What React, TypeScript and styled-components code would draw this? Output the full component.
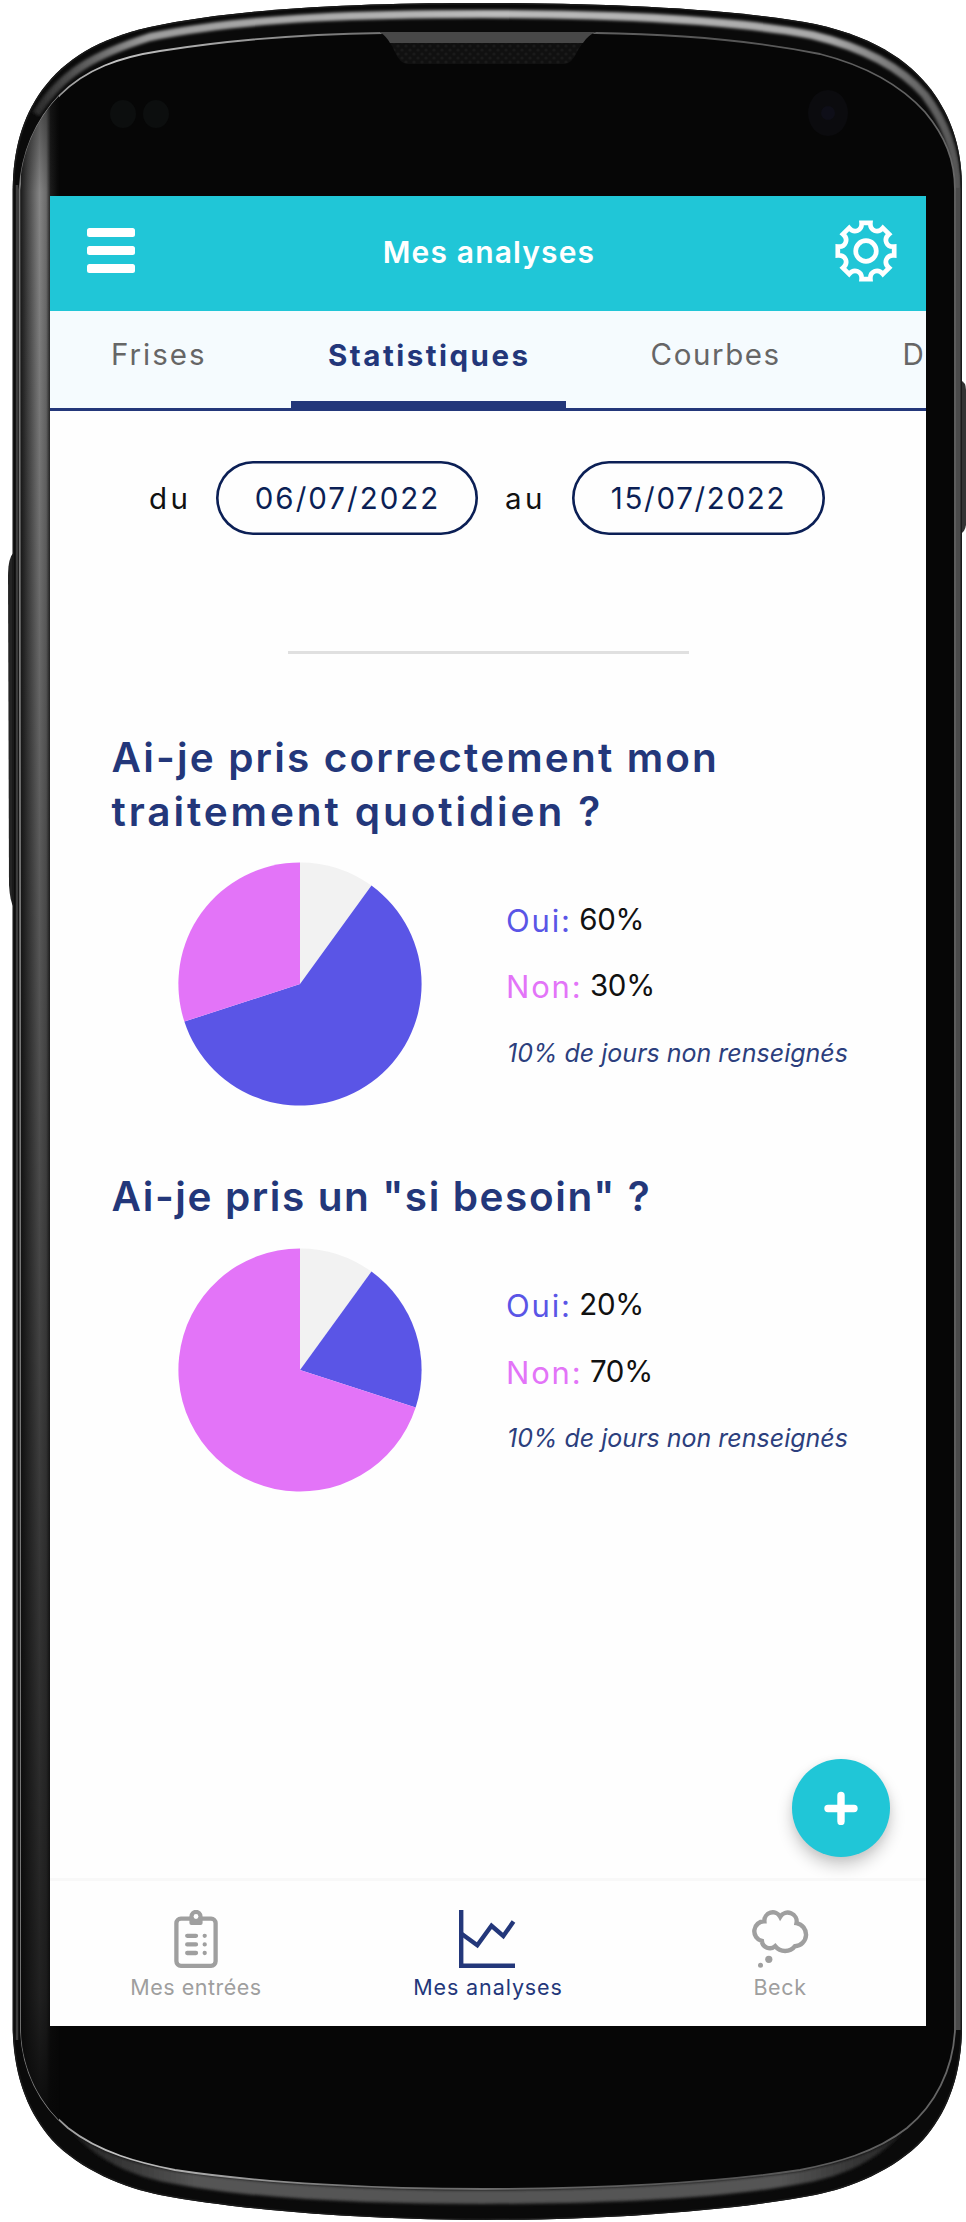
import React from "react";
import styled, { createGlobalStyle } from "styled-components";

const cyan = "#20c6d7";
const navy = "#23377a";
const ink = "#0b1f55";
const violet = "#5a55e6";
const pink = "#e374f8";
const grey = "#9f9f9f";

const GlobalStyle = createGlobalStyle`
  * { box-sizing: border-box; }
  body { margin: 0; background: #fff; font-family: Inter, Roboto, "Liberation Sans", sans-serif; }
`;

const Phone = styled.div`
  position: relative;
  width: 966px;
  height: 2222px;
  padding: 196px 40px 196px 50px;
  overflow: hidden;
`;

const Shell = styled.svg`
  position: absolute;
  inset: 0;
`;

const Screen = styled.main`
  position: relative;
  display: flex;
  flex-direction: column;
  width: 876px;
  height: 1830px;
  background: #fefefe;
  overflow: hidden;
`;

const Header = styled.header`
  display: grid;
  grid-template-columns: 1fr auto 1fr;
  align-items: center;
  flex: none;
  height: 114.5px;
  padding: 0 29.5px 5.5px 36.5px;
  background: ${cyan};
`;

const Title = styled.h1`
  margin: 0;
  padding: 2px 5px 0 0;
  color: #fff;
  font-size: 30px;
  font-weight: 600;
  line-height: 40px;
  letter-spacing: 1.15px;
`;

const MenuButton = styled.button`
  display: flex;
  flex-direction: column;
  gap: 9.8px;
  width: 48.5px;
  padding: 0;
  border: 0;
  background: none;
`;

const MenuBar = styled.span`
  height: 8.2px;
  border-radius: 2.5px;
  background: #fff;
`;

const GearIcon = styled.svg`
  justify-self: end;
`;

const Tabs = styled.nav`
  display: flex;
  flex: none;
  height: 100.5px;
  background: #f5fbfe;
  border-bottom: 3px solid ${navy};
  overflow: hidden;
`;

const Tab = styled.div<{ $width: number; $indent: number; $spacing: number; $active?: boolean }>`
  flex: none;
  width: ${(p) => p.$width}px;
  padding: ${(p) => (p.$active ? 24 : 23)}px 0 0 ${(p) => p.$indent}px;
  border-bottom: ${(p) => (p.$active ? `7px solid ${navy}` : "none")};
  color: ${(p) => (p.$active ? navy : "#666")};
  font-size: 29.5px;
  font-weight: ${(p) => (p.$active ? 700 : 400)};
  line-height: 40px;
  letter-spacing: ${(p) => p.$spacing}px;
  white-space: nowrap;
`;

const Content = styled.section`
  flex: 1;
  padding-top: 50px;
`;

const DateRow = styled.div`
  display: flex;
  align-items: center;
  height: 73.5px;
  padding-left: 99px;
  font-size: 29.5px;
  line-height: 40px;
`;

const DateLabel = styled.span<{ $width: number }>`
  width: ${(p) => p.$width}px;
  color: #111;
  letter-spacing: 3.5px;
`;

const DatePill = styled.span<{ $width: number; $spacing: number }>`
  display: flex;
  align-items: center;
  justify-content: center;
  width: ${(p) => p.$width}px;
  height: 73.5px;
  margin-right: 27px;
  padding-left: 1px;
  border-radius: 37px;
  box-shadow: inset 0 0 0 2.6px ${ink};
  color: ${ink};
  letter-spacing: ${(p) => p.$spacing}px;
`;

const Divider = styled.hr`
  width: 401px;
  height: 3px;
  margin: 116.5px auto 77px;
  border: 0;
  background: #e0e0e0;
`;

const Question = styled.article`
  margin-bottom: 64px;
`;

const QuestionTitle = styled.h2`
  margin: 0 0 24px;
  padding-left: 61.5px;
  color: ${navy};
  font-size: 40.5px;
  font-weight: 600;
  line-height: 53.7px;
  white-space: nowrap;
`;

const TitleLine = styled.span<{ $spacing: number }>`
  display: block;
  letter-spacing: ${(p) => p.$spacing}px;
`;

const ChartRow = styled.div`
  display: flex;
  height: 243.5px;
  padding-left: 128px;
`;

const Legend = styled.div`
  margin-left: 84px;
  padding-top: 38.5px;
`;

const LegendRow = styled.div`
  display: flex;
  height: 66.5px;
`;

const Answer = styled.span<{ $color: string }>`
  margin-right: 7.5px;
  color: ${(p) => p.$color};
  font-size: 31px;
  line-height: 40px;
  letter-spacing: 1.8px;
`;

const Percent = styled.span`
  color: #111;
  font-size: 29.5px;
  line-height: 37px;
  letter-spacing: -0.3px;
`;

const Note = styled.p`
  margin: -1.4px 0 0 1px;
  color: #2c3f7d;
  font-size: 25px;
  font-style: italic;
  line-height: 40px;
  white-space: nowrap;
`;

const AddButton = styled.button`
  position: absolute;
  right: 36.5px;
  bottom: 169.5px;
  display: flex;
  align-items: center;
  justify-content: center;
  width: 97.6px;
  height: 97.6px;
  padding: 0;
  border: 0;
  border-radius: 50%;
  background: ${cyan};
  box-shadow: 0 9px 16px rgba(0, 0, 0, 0.2), 0 2px 8px rgba(0, 0, 0, 0.06);
`;

const BottomNav = styled.nav`
  display: flex;
  flex: none;
  height: 148px;
  border-top: 3px solid #f8f8f8;
`;

const NavItem = styled.div<{ $active?: boolean; $spacing: number }>`
  display: flex;
  flex: 1;
  flex-direction: column;
  align-items: center;
  gap: 3.5px;
  padding-top: 29px;
  color: ${(p) => (p.$active ? navy : grey)};
  font-size: 21.5px;
  line-height: 30px;
  letter-spacing: ${(p) => p.$spacing}px;
`;

const OUTER =
  "M12.7 190 C13 150 22 118 42 90 C66 58 98 39 150 27 C250 6 380 3 483 3 C620 3 740 10 815 24 C880 38 915 66 935 95 C953 122 962 150 962 190 L962 2030 C961 2080 945 2115 923 2140 C895 2170 850 2188 815 2195 C725 2212 595 2220 483 2220 C380 2220 250 2212 160 2195 C125 2188 80 2170 52 2140 C30 2115 14 2080 12.7 2030 Z";
const INNER =
  "M19.5 190 C22 150 36 120 60 95 C86 69 120 57 160 51 C230 40 300 34 383 33 L596 33 C680 34 760 42 820 54 C875 68 905 90 925 112 C945 136 955 160 955 190 L955 2030 C953 2070 935 2105 907 2128 C875 2153 835 2163 800 2170 C715 2183 595 2189 483 2189 C380 2189 260 2183 175 2170 C140 2163 100 2153 68 2128 C40 2105 22 2070 21 2030 Z";

function PhoneShell() {
  return (
    <Shell width="966" height="2222" viewBox="0 0 966 2222" aria-hidden="true">
      <defs>
        <linearGradient id="side" x1="21" x2="58" y1="0" y2="0" gradientUnits="userSpaceOnUse">
          <stop offset="0" stopColor="#1c1c1c" />
          <stop offset="0.2" stopColor="#484848" />
          <stop offset="0.5" stopColor="#858585" />
          <stop offset="0.68" stopColor="#6c6c6c" />
          <stop offset="0.8" stopColor="#1c1c1c" />
          <stop offset="1" stopColor="#080808" />
        </linearGradient>
        <linearGradient id="shade" x1="0" x2="0" y1="90" y2="2140" gradientUnits="userSpaceOnUse">
          <stop offset="0" stopColor="#070707" stopOpacity="0.5" />
          <stop offset="0.05" stopColor="#070707" stopOpacity="0" />
          <stop offset="0.38" stopColor="#070707" stopOpacity="0.34" />
          <stop offset="0.93" stopColor="#070707" stopOpacity="0.8" />
          <stop offset="1" stopColor="#070707" stopOpacity="1" />
        </linearGradient>
        <linearGradient id="rim" x1="35" x2="960" y1="0" y2="0" gradientUnits="userSpaceOnUse">
          <stop offset="0" stopColor="#2a2a2a" />
          <stop offset="0.12" stopColor="#9c9c9c" />
          <stop offset="0.5" stopColor="#bcbcbc" />
          <stop offset="0.86" stopColor="#a8a8a8" />
          <stop offset="0.95" stopColor="#6a6a6a" />
          <stop offset="1" stopColor="#555" />
        </linearGradient>
        <linearGradient id="edge" x1="20" x2="955" y1="0" y2="0" gradientUnits="userSpaceOnUse">
          <stop offset="0" stopColor="#777" />
          <stop offset="0.1" stopColor="#c4c4c4" />
          <stop offset="0.35" stopColor="#777" />
          <stop offset="0.75" stopColor="#555" />
          <stop offset="1" stopColor="#666" />
        </linearGradient>
        <linearGradient id="base" x1="72" x2="903" y1="0" y2="0" gradientUnits="userSpaceOnUse">
          <stop offset="0" stopColor="#222" />
          <stop offset="0.15" stopColor="#555" />
          <stop offset="0.85" stopColor="#555" />
          <stop offset="1" stopColor="#222" />
        </linearGradient>
        <pattern id="mesh" width="8" height="8" patternUnits="userSpaceOnUse">
          <rect width="8" height="8" fill="#101010" />
          <circle cx="2" cy="2" r="1.6" fill="#1a1a1a" />
          <circle cx="6" cy="6" r="1.6" fill="#1a1a1a" />
        </pattern>
        <filter id="soft" x="-5%" y="-20%" width="110%" height="140%">
          <feGaussianBlur stdDeviation="1.4" />
        </filter>
        <clipPath id="outerClip">
          <path d={OUTER} />
        </clipPath>
        <clipPath id="innerClip">
          <path d={INNER} />
        </clipPath>
      </defs>

      <path d="M14 552 Q8 558 8 575 L9 885 Q10 902 14 908 Z" fill="#242424" />
      <path d="M960 380 Q966 382 966 390 L966 525 Q965 532 960 534 Z" fill="#333" />

      <path d={OUTER} fill="#0a0a0a" />
      <g clipPath="url(#outerClip)">
        <path
          d="M36 114 C62 72 96 54 150 37 C250 16 380 14 483 14 C620 14 740 21 812 35 C870 49 905 72 925 95 C945 122 956 150 958 190"
          fill="none"
          stroke="url(#rim)"
          strokeWidth="8"
          filter="url(#soft)"
        />
        <path
          d="M72 2132 C102 2155 140 2164 175 2171 C260 2184 380 2190 483 2190 C586 2190 715 2184 800 2171 C835 2164 873 2155 903 2132 C873 2165 835 2178 800 2184 C715 2200 586 2204 483 2204 C380 2204 260 2200 175 2184 C140 2178 102 2165 72 2132 Z"
          fill="url(#base)"
          filter="url(#soft)"
        />
        <path d="M17 185 V2040" stroke="#3c3c3c" strokeWidth="2.5" />
        <path d="M958.5 188 V2030" stroke="#4a4a4a" strokeWidth="5" />
        <path d={OUTER} fill="none" stroke="#1a1a1a" strokeWidth="3" />
      </g>
      <path d={INNER} fill="#060606" stroke="url(#edge)" strokeWidth="1.8" />
      <g clipPath="url(#innerClip)">
        <rect x="21" y="90" width="38" height="2060" fill="url(#side)" />
        <rect x="21" y="90" width="38" height="2060" fill="url(#shade)" />
      </g>
      <path d="M380 32 H596 Q586 36 578 50 Q572 64 564 64 H408 Q400 64 395 52 Q390 40 380 32 Z" fill="url(#mesh)" />
      <path d="M380 32 H596 Q588 35 583 43 H390 Q387 37 380 32 Z" fill="#484848" />
      <ellipse cx="123" cy="114" rx="13" ry="14" fill="#0c0e0e" />
      <ellipse cx="156" cy="114" rx="13" ry="14" fill="#0c0e0e" />
      <ellipse cx="828" cy="113" rx="20" ry="23" fill="#0b0b0e" />
      <circle cx="828" cy="113" r="7" fill="#0e0e18" />
    </Shell>
  );
}

function gearPath() {
  const point = (x: number, y: number, degrees: number) => {
    const a = (degrees * Math.PI) / 180;
    return `${(x * Math.cos(a) - y * Math.sin(a)).toFixed(2)} ${(x * Math.sin(a) + y * Math.cos(a)).toFixed(2)}`;
  };
  let d = `M${point(-4.4, -28.2, 0)}`;
  for (let i = 0; i < 8; i++) {
    const tooth = i * 45;
    const valley = tooth + 22.5;
    d += ` L${point(4.4, -28.2, tooth)} C${point(-4.4, -20.2, valley)} ${point(4.4, -20.2, valley)} ${point(-4.4, -28.2, tooth + 45)}`;
  }
  return `${d} Z`;
}

function Gear() {
  return (
    <GearIcon width="62" height="62" viewBox="-31 -31 62 62" fill="none" stroke="#fff" strokeWidth="4.7">
      <path d={gearPath()} />
      <circle r="10.3" />
    </GearIcon>
  );
}

function ClipboardIcon() {
  return (
    <svg width="44" height="58" viewBox="0 0 44 58" fill="none" stroke="currentColor" strokeWidth="4.3">
      <rect x="2.4" y="8.6" width="39.2" height="47.2" rx="4.5" />
      <path d="M15.4 6.4 a6.6 6.6 0 0 1 13.2 0 V13 q0 2 -2 2 H17.4 q-2 0 -2 -2 Z" fill="currentColor" stroke="none" />
      <circle cx="22" cy="6.5" r="2.4" fill="#fefefe" stroke="none" />
      <path d="M13.2 25.8 H22 M13.2 34.4 H22 M13.2 43 H22 M30.7 25.8 h.01 M30.7 34.4 h.01 M30.7 43 h.01" strokeLinecap="round" />
    </svg>
  );
}

function LineChartIcon() {
  return (
    <svg width="58" height="58" viewBox="0 0 58 58" fill="none" stroke="currentColor" strokeWidth="4.4">
      <path d="M2.2 0 V55.8 H56" />
      <path d="M2.5 23.8 L18.3 35.2 L32.5 15.8 L44.3 26 L54.5 11.5" />
    </svg>
  );
}

function ThoughtIcon() {
  return (
    <svg width="60" height="58" viewBox="0 0 60 58" fill="none" stroke="currentColor" strokeWidth="4.4">
      <path d="M14.4 11.3 A8.4 8.4 0 0 1 30.2 6.8 A8.9 8.9 0 0 1 46.5 13.2 A11.6 11.6 0 0 1 45 36.2 A12.5 12.5 0 0 1 25.2 36.2 A8 8 0 0 1 11.9 31 A10 10 0 0 1 14.4 11.3 Z" />
      <circle cx="18.8" cy="49.3" r="3.6" fill="currentColor" stroke="none" />
      <circle cx="10.5" cy="55.3" r="2.5" fill="currentColor" stroke="none" />
    </svg>
  );
}

function Pie({ yes, no }: { yes: number; no: number }) {
  const r = 121.6;
  const at = (share: number) => {
    const a = (share / 100) * Math.PI * 2;
    return `${(r * Math.sin(a)).toFixed(2)} ${(-r * Math.cos(a)).toFixed(2)}`;
  };
  const blank = 100 - yes - no;
  const slice = (from: number, to: number) =>
    `M0 0 L${at(from)} A${r} ${r} 0 ${to - from > 50 ? 1 : 0} 1 ${at(to)} Z`;
  return (
    <svg width="244" height="244" viewBox="-122 -122 244 244">
      <path d={slice(0, blank)} fill="#f2f2f2" />
      <path d={slice(blank, blank + yes)} fill={violet} />
      <path d={slice(blank + yes, 100)} fill={pink} />
    </svg>
  );
}

function Stats({ yes, no }: { yes: number; no: number }) {
  return (
    <ChartRow>
      <Pie yes={yes} no={no} />
      <Legend>
        <LegendRow>
          <Answer $color={violet}>Oui:</Answer>
          <Percent>{yes}%</Percent>
        </LegendRow>
        <LegendRow>
          <Answer $color={pink}>Non:</Answer>
          <Percent>{no}%</Percent>
        </LegendRow>
        <Note>{100 - yes - no}% de jours non renseignés</Note>
      </Legend>
    </ChartRow>
  );
}

export default function App() {
  return (
    <Phone>
      <GlobalStyle />
      <PhoneShell />
      <Screen>
        <Header>
          <MenuButton aria-label="Menu">
            <MenuBar />
            <MenuBar />
            <MenuBar />
          </MenuButton>
          <Title>Mes analyses</Title>
          <Gear />
        </Header>
        <Tabs>
          <Tab $width={241} $indent={61} $spacing={2}>Frises</Tab>
          <Tab $width={275} $indent={37} $spacing={2.5} $active>Statistiques</Tab>
          <Tab $width={287} $indent={84.5} $spacing={1.6}>Courbes</Tab>
          <Tab $width={60} $indent={49.5} $spacing={2}>D</Tab>
        </Tabs>
        <Content>
          <DateRow>
            <DateLabel $width={67}>du</DateLabel>
            <DatePill $width={262} $spacing={2}>06/07/2022</DatePill>
            <DateLabel $width={66.5}>au</DateLabel>
            <DatePill $width={253} $spacing={1.7}>15/07/2022</DatePill>
          </DateRow>
          <Divider />
          <Question>
            <QuestionTitle>
              <TitleLine $spacing={2.15}>Ai-je pris correctement mon</TitleLine>
              <TitleLine $spacing={2.9}>traitement quotidien ?</TitleLine>
            </QuestionTitle>
            <Stats yes={60} no={30} />
          </Question>
          <Question>
            <QuestionTitle>
              <TitleLine $spacing={1.6}>Ai-je pris un "si besoin" ?</TitleLine>
            </QuestionTitle>
            <Stats yes={20} no={70} />
          </Question>
        </Content>
        <AddButton aria-label="Ajouter">
          <svg width="34" height="34" viewBox="0 0 34 34" stroke="#fff" strokeWidth="7.4" strokeLinecap="round">
            <path d="M17 4.5 V30.5 M4 17.5 H30" />
          </svg>
        </AddButton>
        <BottomNav>
          <NavItem $spacing={0.5}>
            <ClipboardIcon />
            Mes entrées
          </NavItem>
          <NavItem $spacing={0.9} $active>
            <LineChartIcon />
            Mes analyses
          </NavItem>
          <NavItem $spacing={0.6}>
            <ThoughtIcon />
            Beck
          </NavItem>
        </BottomNav>
      </Screen>
    </Phone>
  );
}
